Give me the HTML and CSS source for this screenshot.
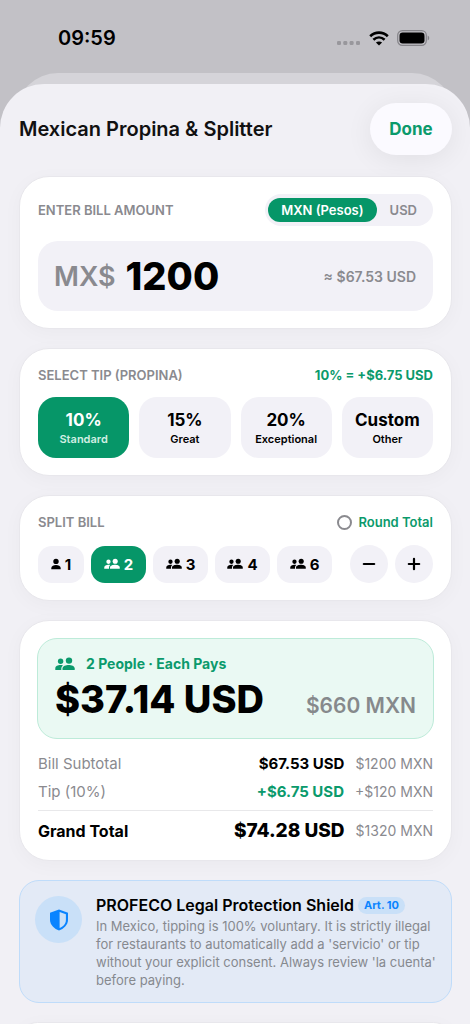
FILE: index.html
```html
<!DOCTYPE html>
<html lang="en">
<head>
<meta charset="utf-8">
<meta name="viewport" content="width=device-width, initial-scale=1">
<title>Mexican Propina &amp; Splitter</title>
<link rel="stylesheet" href="styles.css">
</head>
<body>
<svg class="defs" aria-hidden="true">
  <symbol id="person" viewBox="0 0 10 12"><circle cx="5" cy="3.4" r="2.7"/><path d="M0.3 11.2V10C0.3 7.9 2.8 7 5 7s4.7 0.900 4.700 3v1.200z"/></symbol>
  <symbol id="people" viewBox="0 0 20 14"><circle cx="5.600" cy="4.200" r="2.700"/><circle cx="14" cy="3.600" r="3.200"/><path d="M0.300 13v-1.700C0.300 9 3 8 5.400 8c0.900 0 1.800 0.100 2.600 0.400C6.800 9.300 6.300 10.300 6.300 11.600V13z"/><path d="M7.500 13v-1.500C7.500 9 11 8 13.700 8s6 1 6 3.500V13z"/></symbol>
</svg>
<div class="status">
  <span class="time">09:59</span>
  <span class="indicators">
    <svg width="24" height="5" viewBox="0 0 24 5" fill="#98979c"><rect x="0" y="0" width="4" height="4" rx="1.300"/><rect x="6.300" y="0" width="4" height="4" rx="1.300"/><rect x="12.600" y="0" width="4" height="4" rx="1.300"/><rect x="19" y="0" width="4" height="4" rx="1.300"/></svg>
    <svg class="wifi" width="20" height="15" viewBox="0 0 20 15"><g fill="none" stroke="#000" stroke-width="2.600"><path d="M1.200 5.300C6.200 0.400 13.800 0.400 18.800 5.300"/><path d="M4.400 8.700C7.700 5.700 12.300 5.700 15.600 8.700"/></g><path d="M10 14.500L6.900 11.500C8.700 10 11.300 10 13.100 11.500z"/></svg>
    <svg class="battery" width="33" height="16" viewBox="0 0 33 16"><rect x="0.700" y="0.700" width="28.600" height="14.600" rx="4.600" fill="none" stroke="#858489" stroke-width="1.200"/><rect x="2.500" y="2.500" width="25" height="11" rx="3.200"/><path d="M30.700 5.500c2 0.800 2 4.200 0 5z" fill="#858489"/></svg>
  </span>
</div>
<div class="back-sheet"></div>
<main class="sheet">
  <header class="header">
    <h1>Mexican Propina &amp; Splitter</h1>
    <button class="done" type="button">Done</button>
  </header>

  <section class="card bill-card">
    <div class="row">
      <label class="caption" for="amount">ENTER BILL AMOUNT</label>
      <div class="toggle">
        <button class="on" type="button" aria-pressed="true">MXN (Pesos)</button>
        <button type="button" aria-pressed="false">USD</button>
      </div>
    </div>
    <div class="amount-box">
      <span class="currency">MX$</span>
      <input id="amount" class="amount" type="text" inputmode="decimal" value="1200">
      <span class="approx">≈ $67.53 USD</span>
    </div>
  </section>

  <section class="card">
    <div class="row">
      <h2 class="caption">SELECT TIP (PROPINA)</h2>
      <span class="tip-value">10% = +$6.75 USD</span>
    </div>
    <div class="tips">
      <button class="tip on" type="button" aria-pressed="true"><strong>10%</strong><span>Standard</span></button>
      <button class="tip" type="button"><strong>15%</strong><span>Great</span></button>
      <button class="tip" type="button"><strong>20%</strong><span>Exceptional</span></button>
      <button class="tip" type="button"><strong>Custom</strong><span>Other</span></button>
    </div>
  </section>

  <section class="card">
    <div class="row">
      <h2 class="caption">SPLIT BILL</h2>
      <label class="round"><input type="checkbox">Round Total</label>
    </div>
    <div class="splits">
      <button class="split one" type="button"><svg class="i1"><use href="#person"/></svg>1</button>
      <button class="split on" type="button" aria-pressed="true"><svg class="i2"><use href="#people"/></svg>2</button>
      <button class="split" type="button"><svg class="i2"><use href="#people"/></svg>3</button>
      <button class="split" type="button"><svg class="i2"><use href="#people"/></svg>4</button>
      <button class="split" type="button"><svg class="i2"><use href="#people"/></svg>6</button>
      <div class="steppers">
        <button class="step" type="button" aria-label="Fewer people"><svg width="14" height="14" viewBox="0 0 14 14"><path d="M1.800 7h10.400"/></svg></button>
        <button class="step" type="button" aria-label="More people"><svg width="14" height="14" viewBox="0 0 14 14"><path d="M1.800 7h10.400M7 1.800v10.400"/></svg></button>
      </div>
    </div>
  </section>

  <section class="card total-card">
    <div class="each">
      <div class="each-label"><svg class="i3"><use href="#people"/></svg>2 People · Each Pays</div>
      <div class="each-row"><strong>$37.14 USD</strong><span>$660 MXN</span></div>
    </div>
    <div class="line"><span class="name">Bill Subtotal</span><span class="usd">$67.53 USD</span><span class="mxn">$1200 MXN</span></div>
    <div class="line"><span class="name">Tip (10%)</span><span class="usd green">+$6.75 USD</span><span class="mxn">+$120 MXN</span></div>
    <div class="line grand"><span class="name">Grand Total</span><span class="usd">$74.28 USD</span><span class="mxn">$1320 MXN</span></div>
  </section>

  <section class="legal">
    <span class="shield"><svg width="20" height="22" viewBox="0 0 20 22"><path d="M10 0.500L19 3.800V11c0 5-4.500 9-9 10.500C5.500 20 1 16 1 11V3.800z" fill="#0a84ff"/><path d="M10.600 2.900L16.900 5.200V11c0 3.800-3 6.800-6.300 8z" fill="#c9e0f8"/></svg></span>
    <div class="legal-body">
      <div class="legal-head"><h2>PROFECO Legal Protection Shield</h2><span class="badge">Art. 10</span></div>
      <p>In Mexico, tipping is 100% voluntary. It is strictly illegal for restaurants to automatically add a 'servicio' or tip without your explicit consent. Always review 'la cuenta' before paying.</p>
    </div>
  </section>

  <section class="card"></section>
</main>
</body>
</html>
```
FILE: styles.css
```css
* { box-sizing: border-box; }
html { height: 100%; overflow: hidden; }
body {
  margin: 0;
  height: 100%;
  overflow: hidden;
  background: #c2c1c6;
  color: #000;
  font-family: Inter, "Liberation Sans", sans-serif;
  display: flex;
  flex-direction: column;
}
button, input { font: inherit; color: inherit; }
button { border: 0; padding: 0; background: #f2f1f7; cursor: pointer; }
h1, h2, p { margin: 0; }
.defs { display: none; }

.status {
  flex: none;
  height: 73px;
  padding: 3px 40px 0 58px;
  display: flex;
  align-items: center;
  justify-content: space-between;
}
.time { font-size: 20px; font-weight: 600; }
.indicators { display: flex; align-items: center; }
.indicators svg:first-child { margin-top: 10px; }
.wifi { margin-left: 8px; }
.battery { margin-left: 8px; }

.back-sheet {
  flex: none;
  height: 48px;
  margin: 0 16px;
  border-radius: 42px 42px 0 0;
  background: #d5d4d9;
}
.sheet {
  flex: 1 0 auto;
  margin-top: -37px;
  padding: 19px 18px 0 19px;
  border-radius: 44px 44px 0 0;
  background: #f1f0f5;
  display: flex;
  flex-direction: column;
  gap: 19px;
}
.header {
  display: flex;
  align-items: center;
  justify-content: space-between;
  margin-bottom: 2px;
}
h1 { font-size: 20px; font-weight: 600; color: #111; }
.done {
  width: 82px;
  height: 52px;
  border-radius: 26px;
  background: #fbfaff;
  color: #0b9a6c;
  font-size: 17px;
  font-weight: 700;
  box-shadow: 0 4px 28px rgba(0, 0, 0, 0.07);
}

.card {
  padding: 18px 18px 17px;
  border: 1px solid #e8e7ec;
  border-radius: 30px;
  background: #fff;
  box-shadow: 0 4px 20px rgba(0, 0, 0, 0.03);
}
.bill-card { padding-top: 17px; }
.row { display: flex; align-items: center; justify-content: space-between; }
.caption { font-size: 13px; font-weight: 600; color: #8a8a8f; line-height: 16px; }
.toggle {
  display: flex;
  padding: 4px 3px;
  border-radius: 16px;
  background: #f2f1f7;
}
.toggle button {
  height: 24px;
  padding: 0 13px;
  border-radius: 12px;
  background: none;
  color: #8a8a8f;
  font-size: 13px;
  font-weight: 600;
}
.toggle .on { background: #069668; color: #fff; }
.amount-box {
  display: flex;
  align-items: center;
  height: 70px;
  margin-top: 15px;
  padding: 0 17px 0 16px;
  border-radius: 20px;
  background: #f2f1f7;
}
.currency { font-size: 27px; font-weight: 600; color: #8a8a8f; }
.amount {
  flex: 1;
  min-width: 0;
  margin-left: 10px;
  padding: 0;
  border: 0;
  outline: 0;
  background: none;
  font-size: 38px;
  font-weight: 800;
}
.approx { font-size: 14px; font-weight: 600; color: #8a8a8f; white-space: nowrap; }

.tip-value { font-size: 13px; font-weight: 700; line-height: 16px; color: #0b9a6c; }
.tips { display: grid; grid-template-columns: repeat(4, 1fr); gap: 10px; margin-top: 14px; }
.tip {
  height: 61px;
  border-radius: 18px;
  display: flex;
  flex-direction: column;
  align-items: center;
  justify-content: center;
}
.tip strong { font-size: 17px; font-weight: 700; line-height: 22px; }
.tip span { font-size: 11px; font-weight: 600; line-height: 16px; }
.on { background: #069668; color: #fff; }
.tip.on span { color: #d2efe4; }

.round {
  display: flex;
  align-items: center;
  gap: 6px;
  color: #0b9a6c;
  font-size: 13px;
  font-weight: 600;
  line-height: 16px;
}
.round input {
  appearance: none;
  width: 15px;
  height: 15px;
  margin: 0;
  border: 2px solid #8a8a8f;
  border-radius: 50%;
}
.splits { display: flex; align-items: center; gap: 7px; margin-top: 15px; }
.split {
  display: flex;
  align-items: center;
  justify-content: center;
  gap: 4px;
  width: 55px;
  height: 37px;
  border-radius: 14px;
  font-size: 15px;
  font-weight: 700;
}
.one { width: 46px; }
.split svg, .i3 { fill: currentColor; }
.i1 { width: 10px; height: 12px; }
.i2 { width: 16px; height: 12px; }
.i3 { width: 20px; height: 14px; }
.steppers { display: flex; gap: 7px; margin-left: auto; }
.step {
  display: flex;
  align-items: center;
  justify-content: center;
  width: 38px;
  height: 38px;
  border-radius: 50%;
}
.step path { stroke: #000; stroke-width: 2.2; stroke-linecap: round; }

.total-card { padding: 17px 17px 14px; }
.each {
  height: 101px;
  margin-bottom: 10px;
  padding: 16px 17px;
  border: 1px solid #bdebd9;
  border-radius: 20px;
  background: #eaf9f3;
}
.each-label {
  display: flex;
  align-items: center;
  gap: 11px;
  margin-bottom: 1px;
  color: #0b9a6c;
  font-size: 14px;
  font-weight: 700;
  line-height: 18px;
}
.each-row { display: flex; align-items: baseline; justify-content: space-between; }
.each-row strong { font-size: 38px; font-weight: 800; line-height: 50px; }
.each-row span { font-size: 21px; font-weight: 600; color: #86898c; }
.line {
  display: flex;
  align-items: center;
  margin: 0 1px;
  height: 28px;
  color: #8a8a8f;
}
.name { font-size: 15px; margin-right: auto; }
.usd { font-size: 15px; font-weight: 700; color: #000; }
.green { color: #0b9a6c; }
.mxn { margin-left: 11px; font-size: 14px; text-align: right; }
.grand { height: 36px; margin-top: 5px; padding-top: 4px; border-top: 1px solid #e8e8ea; }
.grand .name { font-size: 16px; font-weight: 700; color: #000; }
.grand .usd { font-size: 19px; font-weight: 800; }

.legal {
  display: flex;
  gap: 14px;
  padding: 14px 16px 13px 15px;
  border: 1px solid #bfdcfa;
  border-radius: 20px;
  background: #e3eaf6;
}
.shield {
  flex: none;
  display: flex;
  align-items: center;
  justify-content: center;
  width: 47px;
  height: 47px;
  margin-top: 1px;
  border-radius: 50%;
  background: #c9e0f8;
}
.legal-body { flex: 1; min-width: 0; }
.legal-head { display: flex; align-items: center; gap: 4px; white-space: nowrap; }
.legal h2 { font-size: 16px; font-weight: 600; line-height: 20px; }
.badge {
  padding: 0 6px;
  border-radius: 9px;
  background: #c9e0f8;
  color: #0a84ff;
  font-size: 11px;
  font-weight: 700;
  line-height: 17px;
}
.legal p { margin: 2px -4px 0 0; font-size: 13px; line-height: 18px; color: #86898f; }
```
